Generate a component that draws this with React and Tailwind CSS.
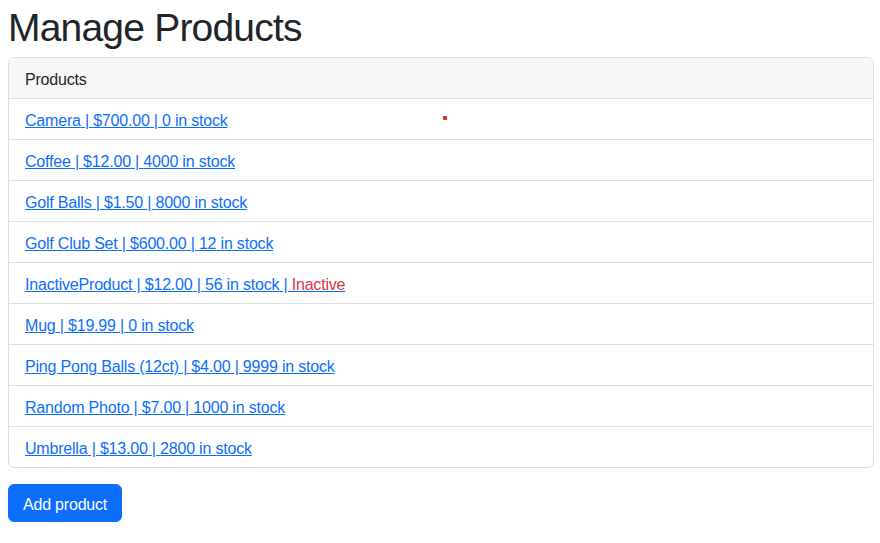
const products = [
  { name: 'Camera', price: '$700.00', stock: 0 },
  { name: 'Coffee', price: '$12.00', stock: 4000 },
  { name: 'Golf Balls', price: '$1.50', stock: 8000 },
  { name: 'Golf Club Set', price: '$600.00', stock: 12 },
  { name: 'InactiveProduct', price: '$12.00', stock: 56, inactive: true },
  { name: 'Mug', price: '$19.99', stock: 0 },
  { name: 'Ping Pong Balls (12ct)', price: '$4.00', stock: 9999 },
  { name: 'Random Photo', price: '$7.00', stock: 1000 },
  { name: 'Umbrella', price: '$13.00', stock: 2800 },
];

export default function App() {
  return (
    <div className="relative min-h-[543px] bg-white pl-2 pr-[6px] font-['Liberation_Sans',Arial,sans-serif] text-base tracking-[-0.2px] text-[#212529]">
      {/* stray marker dot from the original capture */}
      <span className="absolute left-[443px] top-[116px] h-[4px] w-[4px] rounded-[1px] bg-[#e8231f]" />

      <h1 className="mb-2 pt-[6px] text-[39px] leading-[43px] font-normal tracking-[-0.8px]">Manage Products</h1>

      <div className="overflow-hidden rounded-md border border-[#dedede]">
        <div className="border-b border-[#dedede] bg-[#f7f7f7] px-4 pt-[10px] pb-[6px] leading-6">Products</div>
        <ul>
          {products.map((p, i) => (
            <li key={p.name} className={`px-4 pt-[10px] pb-[6px] leading-6 ${i > 0 ? 'border-t border-[#dedede]' : ''}`}>
              <a href="#" className="text-[#0d6efd] underline">
                {p.name} | {p.price} | {p.stock} in stock
                {p.inactive ? (
                  <>
                    {' | '}
                    <span className="text-[#dc3545]">Inactive</span>
                  </>
                ) : null}
              </a>
            </li>
          ))}
        </ul>
      </div>

      <button
        type="button"
        className="mt-4 rounded-md border border-[#0d6efd] bg-[#0d6efd] px-[14px] pt-2 pb-1 leading-6 text-white"
      >
        Add product
      </button>
    </div>
  );
}
